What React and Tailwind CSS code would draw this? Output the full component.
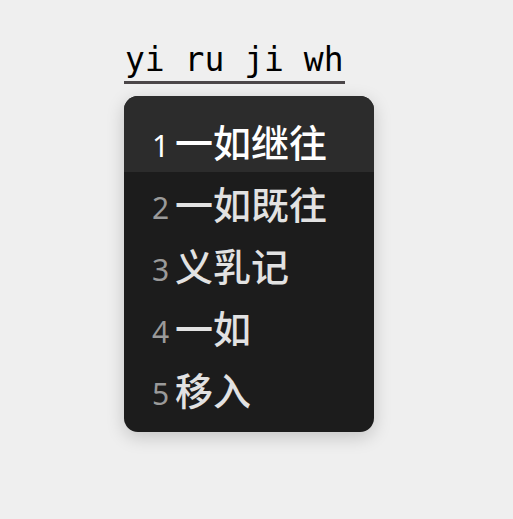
const candidates = ["一如继往", "一如既往", "义乳记", "一如", "移入"];

export default function App() {
  return (
    <div className="min-h-screen bg-[#efefef] pt-[41px] pl-[124px]">
      {/* Composition line */}
      <div className="inline-block">
        <div
          className="text-[33px] leading-[38px] text-black pl-[1px] whitespace-pre"
          style={{ fontFamily: '"DejaVu Sans Mono", monospace' }}
        >
          yi ru ji wh
        </div>
        <div className="mt-[2px] h-[3px] w-[221px] bg-[#4b4648]" />
      </div>

      {/* Candidate panel */}
      <div
        className="mt-[12px] w-[250px] rounded-[14px] bg-[#1c1c1c] overflow-hidden pb-[12px] shadow-[0_5px_18px_rgba(0,0,0,0.18)]"
        style={{ fontFamily: '"Noto Sans", "Noto Sans CJK SC", sans-serif' }}
      >
        {candidates.map((word, i) => {
          const active = i === 0;
          return (
            <div
              key={word}
              className={
                active
                  ? "flex items-baseline pt-[14px] pl-[28px] h-[76px] bg-[#2c2c2c]"
                  : "flex items-baseline pl-[28px] h-[62px]"
              }
            >
              <span
                className={
                  active
                    ? "w-[17px] text-center text-[30px] leading-[62px] text-white"
                    : "w-[17px] text-center text-[30px] leading-[62px] text-[#9a9a9a]"
                }
              >
                {i + 1}
              </span>
              <span
                className={
                  active
                    ? "ml-[6px] text-[38px] font-medium leading-[62px] text-white"
                    : "ml-[6px] text-[38px] font-medium leading-[62px] text-[#e2e2e2]"
                }
                style={{ fontFamily: '"Noto Sans CJK SC", sans-serif' }}
              >
                {word}
              </span>
            </div>
          );
        })}
      </div>
    </div>
  );
}
